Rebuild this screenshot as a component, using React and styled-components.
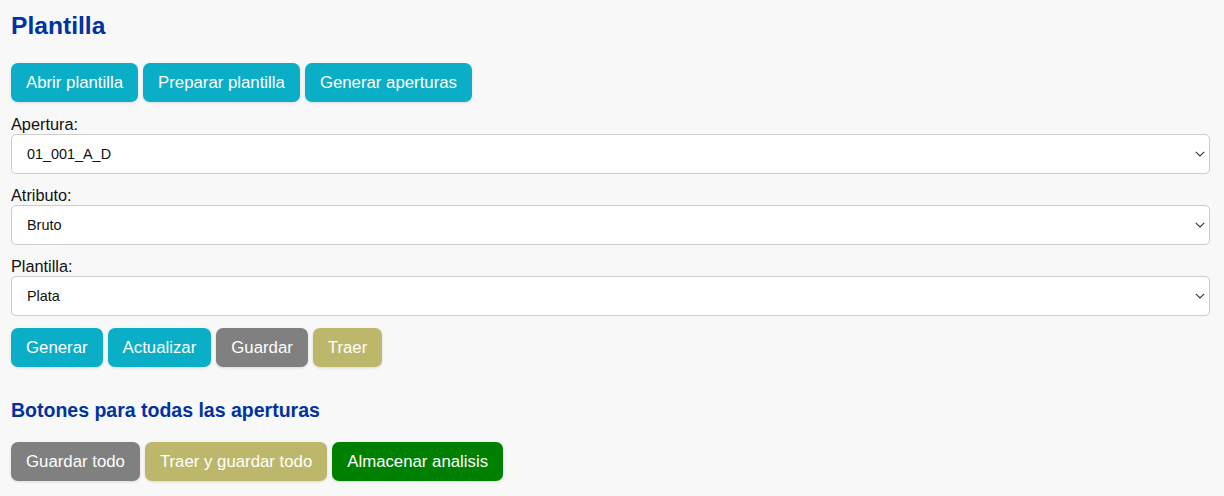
import React from "react";
import styled, { createGlobalStyle } from "styled-components";

const GlobalStyle = createGlobalStyle`
    html, body {
        margin: 0;
        padding: 0;
        background: #f8f8f8;
    }
    body {
        font-family: "Liberation Sans", Arial, Helvetica, sans-serif;
        color: #111;
    }
`;

const FONT = `"Liberation Sans", Arial, Helvetica, sans-serif`;

const COLORS = {
    teal: "#0aaec7",
    gray: "#808080",
    khaki: "#bdb76b",
    green: "#008000",
};

const fields = [
    { label: "Apertura:", options: ["01_001_A_D"] },
    { label: "Atributo:", options: ["Bruto"] },
    { label: "Plantilla:", options: ["Plata"] },
];

// 셀렉트 오른쪽 화살표
const Chevron = () => (
    <ChevronIcon width="10" height="6" viewBox="0 0 10 6" aria-hidden="true">
        <path d="M0.8 0.8 L5 5 L9.2 0.8" fill="none" stroke="#333" strokeWidth="1.1" />
    </ChevronIcon>
);

export default function App() {
    return (
        <Page>
            <GlobalStyle />
            <Title>Plantilla</Title>

            <ButtonRow spacing={13}>
                <ActionButton color={COLORS.teal}>Abrir plantilla</ActionButton>
                <ActionButton color={COLORS.teal}>Preparar plantilla</ActionButton>
                <ActionButton color={COLORS.teal}>Generar aperturas</ActionButton>
            </ButtonRow>

            {fields.map(field => (
                <Field key={field.label}>
                    <Label>{field.label}</Label>
                    <SelectWrap>
                        <Select defaultValue={field.options[0]}>
                            {field.options.map(opt => (
                                <option key={opt}>{opt}</option>
                            ))}
                        </Select>
                        <Chevron />
                    </SelectWrap>
                </Field>
            ))}

            <ButtonRow>
                <ActionButton color={COLORS.teal}>Generar</ActionButton>
                <ActionButton color={COLORS.teal}>Actualizar</ActionButton>
                <ActionButton color={COLORS.gray}>Guardar</ActionButton>
                <ActionButton color={COLORS.khaki}>Traer</ActionButton>
            </ButtonRow>

            <SubTitle>Botones para todas las aperturas</SubTitle>

            <ButtonRow>
                <ActionButton color={COLORS.gray}>Guardar todo</ActionButton>
                <ActionButton color={COLORS.khaki}>Traer y guardar todo</ActionButton>
                <ActionButton color={COLORS.green}>Almacenar analisis</ActionButton>
            </ButtonRow>
        </Page>
    );
}

//------스타일 컴포넌트------
const Page = styled.div`
    padding: 12px 14px 16px 11px;
    font-family: ${FONT};
`;

const Title = styled.h2`
    margin: 0 0 23px;
    font-size: 24.6px;
    font-weight: 700;
    color: #0033a0;
`;

const SubTitle = styled.h3`
    margin: 32px 0 20px;
    font-size: 19.5px;
    font-weight: 700;
    color: #0033a0;
`;

const ButtonRow = styled.div`
    display: flex;
    gap: 5px;
    margin-bottom: ${props => props.spacing || 12}px;
`;

const ActionButton = styled.button`
    background: ${props => props.color};
    color: #fff;
    border: none;
    border-radius: 7px;
    padding: 10px 15px;
    font-family: ${FONT};
    font-size: 16.8px;
    line-height: 19px;
    cursor: pointer;
    box-shadow: 0 1px 3px rgba(0, 0, 0, 0.12);
`;

const Field = styled.div`
    margin-bottom: 12px;
`;

const Label = styled.label`
    display: block;
    font-family: ${FONT};
    font-size: 16.3px;
    line-height: 19px;
`;

const SelectWrap = styled.div`
    position: relative;
`;

const Select = styled.select`
    display: block;
    width: 100%;
    height: 40px;
    padding: 0 30px 0 15px;
    border: 1px solid #cccccc;
    border-radius: 5px;
    background: #fff;
    appearance: none;
    -webkit-appearance: none;
    font-family: ${FONT};
    font-size: 14.4px;
    color: #111;
    outline: none;
`;

const ChevronIcon = styled.svg`
    position: absolute;
    right: 5px;
    top: 17px;
    pointer-events: none;
`;
